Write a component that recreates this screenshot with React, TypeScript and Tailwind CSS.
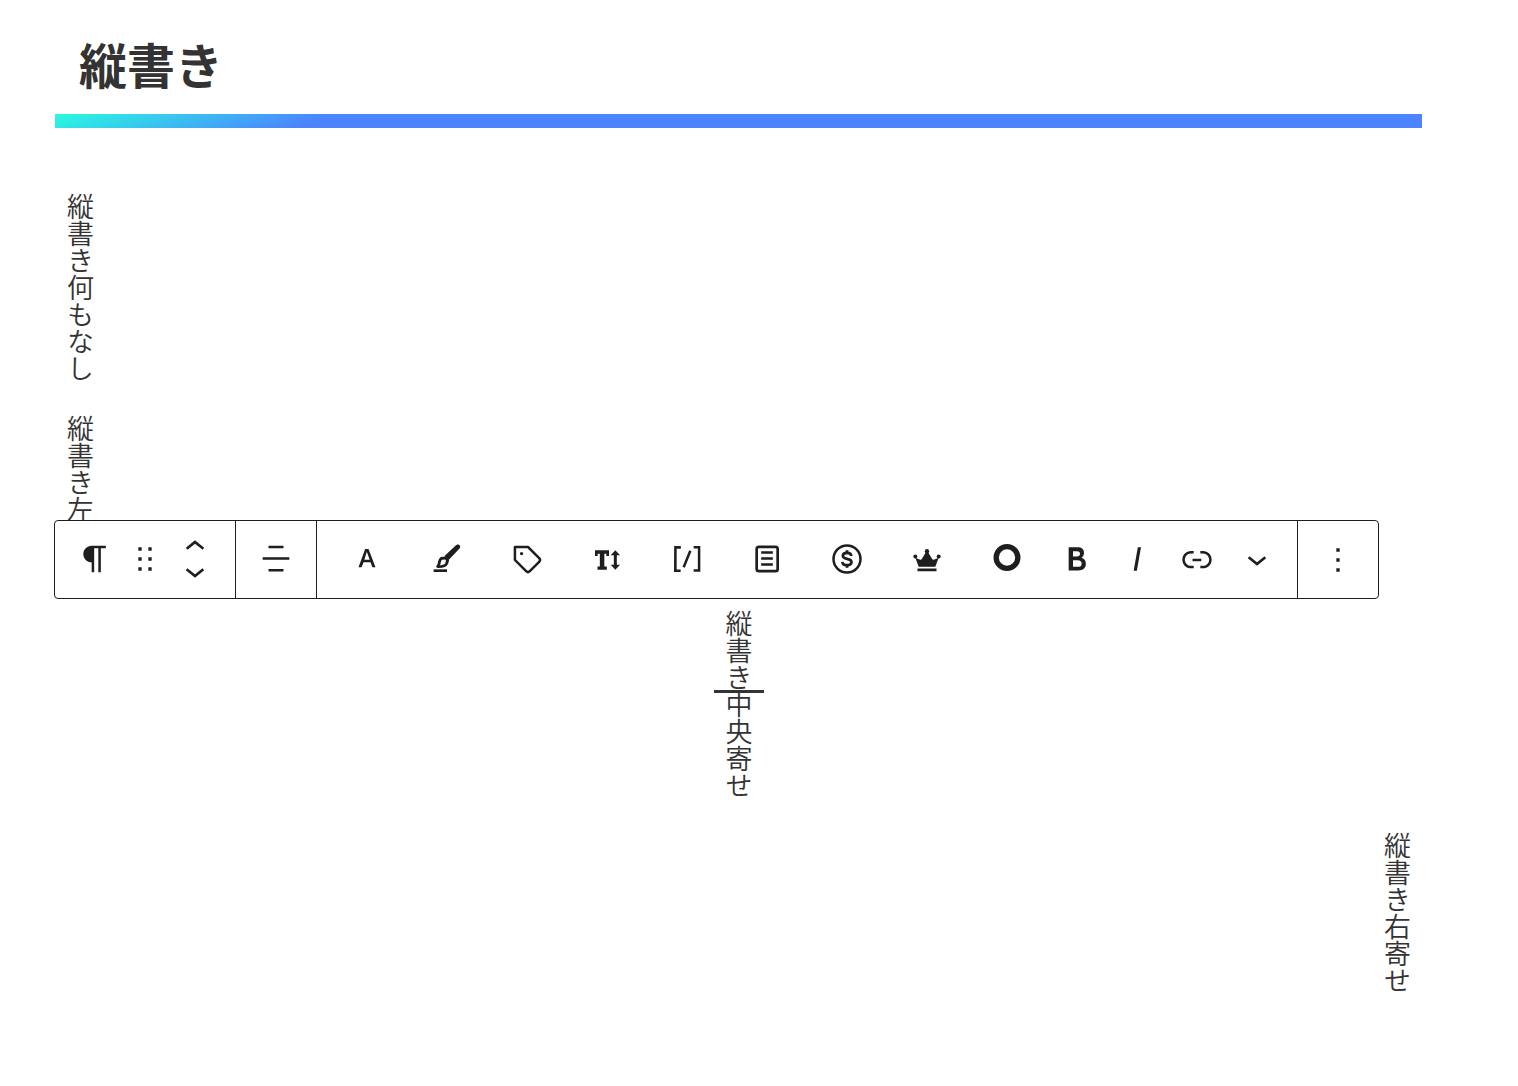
import React from "react";

const icons = {
  paragraph:
    "m9.99609 14v-.2251l.00391.0001v6.225h1.5v-14.5h2.5v14.5h1.5v-14.5h3v-1.5h-8.50391c-2.76142 0-5 2.23858-5 5 0 2.7614 2.23858 5 5 5z",
  drag: "M8 7h2V5H8v2zm0 6h2v-2H8v2zm0 6h2v-2H8v2zm6-14v2h2V5h-2zm0 8h2v-2h-2v2zm0 6h2v-2h-2v2z",
  up: "M6.5 12.4L12 8l5.5 4.4-.9 1.2L12 10l-4.5 3.6-1-1.2z",
  down: "M17.5 11.6L12 16l-5.5-4.4.9-1.2L12 14l4.5-3.6 1 1.2z",
  align:
    "M7.5 5.5h9V4h-9v1.5zm-3.5 7h16V11H4v1.5zm3.5 7h9V18h-9v1.5z",
  color:
    "M12.9 6h-2l-4 11h1.9l1.1-3h4.2l1.1 3h1.9L12.9 6zm-2.5 6.5l1.5-4.9 1.7 4.9h-3.2z",
  tag: "M4.75 4a.75.75 0 0 0-.75.75v7.826c0 .2.08.39.22.53l6.72 6.716a2.313 2.313 0 0 0 3.276-.001l5.61-5.611-.531-.53.532.528a2.315 2.315 0 0 0 0-3.264L13.104 4.22a.75.75 0 0 0-.53-.22H4.75ZM19 12.576a.815.815 0 0 1-.236.574l-5.61 5.611a.814.814 0 0 1-1.153 0L5.5 12.264V5.5h6.763l6.5 6.502a.816.816 0 0 1 .237.574ZM8.75 9.75a1 1 0 1 0 0-2 1 1 0 0 0 0 2Z",
  shortcode:
    "M16 4.2v1.5h2.5v12.5H16v1.5h4V4.2h-4zM4.2 19.8h4v-1.5H5.8V5.8h2.5V4.2h-4l-.1 15.6zm5.1-3.1l1.4.6 4-10-1.4-.6-4 10z",
  bold: "M14.7 11.3c1-.6 1.5-1.6 1.5-3 0-2.3-1.3-3.4-4-3.4H7v14h5.8c1.4 0 2.5-.3 3.3-1 .8-.7 1.2-1.7 1.2-2.9.1-1.9-.8-3.1-2.6-3.7zm-5.1-4h2.3c.6 0 1.1.1 1.4.4.3.3.5.7.5 1.2s-.2 1-.5 1.2c-.3.3-.8.4-1.4.4H9.6V7.3zm4.6 9c-.4.3-1 .4-1.7.4H9.6v-3.9h2.9c.7 0 1.3.2 1.7.5.4.3.6.8.6 1.5s-.2 1.2-.6 1.5z",
  italic: "M12.5 5L10 19h1.9l2.5-14z",
  link: "M15.6 7.2H14v1.5h1.6c2 0 3.7 1.7 3.7 3.7s-1.7 3.7-3.7 3.7H14v1.5h1.6c2.8 0 5.2-2.3 5.2-5.2 0-2.9-2.3-5.2-5.2-5.2zM4.7 12.4c0-2 1.7-3.7 3.7-3.7H10V7.2H8.4c-2.9 0-5.2 2.3-5.2 5.2 0 2.9 2.3 5.2 5.2 5.2H10v-1.5H8.4c-2 0-3.7-1.7-3.7-3.7zm4.6.9h5.3v-1.5H9.3v1.5z",
  more: "M13 19h-2v-2h2v2zm0-6h-2v-2h2v2zm0-6h-2V5h2v2z",
};

const Icon = ({ d, children }: { d?: string; children?: React.ReactNode }) => (
  <svg
    viewBox="0 0 24 24"
    className="w-10 h-10 shrink-0"
    fill="currentColor"
    aria-hidden="true"
  >
    {d ? <path d={d} /> : children}
  </svg>
);

const BrushIcon = () => (
  <Icon>
    <path d="M19.2 3.4c.9.5 1 1.600.3 2.300l-6.500 6.900-2.500-2.400 6.900-6.500c.5-.5 1.200-.6 1.800-.3z" />
    <path
      d="M8.500 11.700l2.500-.4 1.400 1.400-.6 2c-.6 1.500-2.100 2-5.400 1.900.9-1.200.9-1.900 1.100-2.900.1-.9.500-1.500 1-2z"
      fill="none"
      stroke="currentColor"
      strokeWidth="1.7"
      strokeLinejoin="round"
    />
    <path d="M4 18.200h8v1.600H4z" />
  </Icon>
);

const TextSizeIcon = () => (
  <Icon>
    <path d="M4.800 6.700h8.400v3.500h-1.600V8.800h-1.200v7.700h1.500v1.900H6.300v-1.900h1.400V8.800H6.400v1.400H4.800z" />
    <path d="M17 6.700l2.800 3h-1.900v5.700h1.900l-2.800 3-2.800-3h1.900V9.700h-1.900z" />
  </Icon>
);

const PageIcon = () => (
  <Icon>
    <rect
      x="5.800"
      y="4.700"
      width="12.600"
      height="14.600"
      rx="1.300"
      fill="none"
      stroke="currentColor"
      strokeWidth="1.600"
    />
    <path d="M8.500 7.400h7v1.400h-7zM8.500 11h7v1.400h-7zM8.500 14.600h7V16h-7z" />
  </Icon>
);

const MoneyIcon = () => (
  <Icon>
    <g fill="none" stroke="currentColor">
      <circle cx="12" cy="12" r="8.100" strokeWidth="1.500" />
      <path
        d="M14.600 10.200c-.1-1.200-1.100-1.900-2.600-1.900s-2.500.7-2.500 1.800c0 1 .8 1.500 2.500 1.800s2.700.8 2.700 1.900-1.100 1.900-2.700 1.900-2.700-.7-2.800-2"
        strokeWidth="1.600"
      />
      <path d="M12 6.700v1.700M12 15.600v1.700" strokeWidth="1.700" />
    </g>
  </Icon>
);

const CrownIcon = () => (
  <Icon>
    <path d="M7 16.700L5 11.200l2.900 1.200c.4.2.8 0 1-.4l2.600-4.400h1l2.600 4.400c.2.4.6.6 1 .4l2.900-1.200-2 5.500zM6.300 17.700h11.400v1.600H6.300z" />
    <circle cx="12" cy="7.300" r="1.300" />
    <circle cx="5" cy="10.500" r="1.200" />
    <circle cx="19" cy="10.500" r="1.200" />
  </Icon>
);

const CircleIcon = () => (
  <Icon>
    <circle
      cx="12"
      cy="11.100"
      r="6.500"
      fill="none"
      stroke="currentColor"
      strokeWidth="3.200"
    />
  </Icon>
);

const wideTools = [
  { label: "文字色", icon: <Icon d={icons.color} /> },
  { label: "マーカー", icon: <BrushIcon /> },
  { label: "タグ", icon: <Icon d={icons.tag} /> },
  { label: "文字サイズ", icon: <TextSizeIcon /> },
  { label: "ショートコード", icon: <Icon d={icons.shortcode} /> },
  { label: "テンプレート", icon: <PageIcon /> },
  { label: "広告", icon: <MoneyIcon /> },
  { label: "ランキング", icon: <CrownIcon /> },
  { label: "丸", icon: <CircleIcon /> },
];

const narrowTools = [
  { label: "太字", icon: <Icon d={icons.bold} /> },
  { label: "イタリック", icon: <Icon d={icons.italic} /> },
  { label: "リンク", icon: <Icon d={icons.link} /> },
  { label: "さらに表示", icon: <Icon d={icons.down} /> },
];

const Toolbar = () => {
  const button = "flex items-center justify-center h-full";
  const group = "flex items-center px-[10px] -mt-px border-r border-[#1e1e1e]";
  return (
    <div
      role="toolbar"
      aria-label="ブロックツール"
      className="absolute -left-px top-[327px] flex h-[79px] bg-white border border-[#1e1e1e] rounded text-[#1e1e1e]"
    >
      <div className={group}>
        <button type="button" aria-label="段落" className={`${button} w-[60px]`}>
          <Icon d={icons.paragraph} />
        </button>
        <button type="button" aria-label="ドラッグ" className={`${button} w-10`}>
          <Icon d={icons.drag} />
        </button>
        <div className="flex flex-col w-[60px]">
          <button
            type="button"
            aria-label="上に移動"
            className="flex items-end justify-center h-8"
          >
            <Icon d={icons.up} />
          </button>
          <button
            type="button"
            aria-label="下に移動"
            className="flex items-start justify-center h-8 -mt-4"
          >
            <Icon d={icons.down} />
          </button>
        </div>
      </div>
      <div className={group}>
        <button type="button" aria-label="配置" className={`${button} w-[60px]`}>
          <Icon d={icons.align} />
        </button>
      </div>
      <div className={group}>
        {wideTools.map((tool) => (
          <button
            key={tool.label}
            type="button"
            aria-label={tool.label}
            className={`${button} w-20`}
          >
            {tool.icon}
          </button>
        ))}
        {narrowTools.map((tool) => (
          <button
            key={tool.label}
            type="button"
            aria-label={tool.label}
            className={`${button} w-[60px]`}
          >
            {tool.icon}
          </button>
        ))}
      </div>
      <button
        type="button"
        aria-label="オプション"
        className="flex items-center justify-center w-20"
      >
        <Icon d={icons.more} />
      </button>
    </div>
  );
};

const App = () => {
  const vertical = "[writing-mode:vertical-rl] text-[27px] leading-[50px]";
  return (
    <main className="min-h-screen bg-white pl-[55px] pr-24 pb-24 text-[#333] font-['Noto_Sans_CJK_JP',sans-serif]">
      <h1 className="pt-7 pb-4 pl-6 text-[48px] leading-[70px] font-bold">
        縦書き
      </h1>
      <div className="h-[14px] bg-[linear-gradient(161deg,#29fbe0,#4c83ff_20%)]"></div>
      <div className="relative mt-[65px] flex flex-col items-start gap-[33px] font-[350]">
        <p className={vertical}>縦書き何もなし</p>
        <p className={vertical}>縦書き左寄せ</p>
        <p className={`${vertical} relative self-center`}>
          縦書き中央寄せ
          <span className="absolute left-0 top-20 w-[50px] h-[3px] bg-[#333]"></span>
        </p>
        <p className={`${vertical} self-end`}>縦書き右寄せ</p>
        <Toolbar />
      </div>
    </main>
  );
};

export default App;
